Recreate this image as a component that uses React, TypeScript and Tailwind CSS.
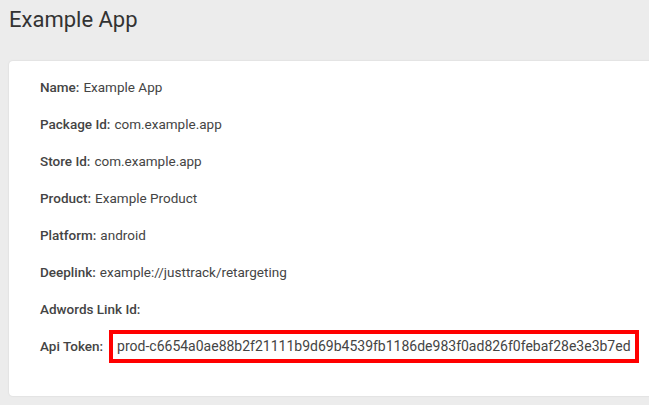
const rows: { label: string; value: string }[] = [
  { label: "Name:", value: "Example App" },
  { label: "Package Id:", value: "com.example.app" },
  { label: "Store Id:", value: "com.example.app" },
  { label: "Product:", value: "Example Product" },
  { label: "Platform:", value: "android" },
  { label: "Deeplink:", value: "example://justtrack/retargeting" },
  { label: "Adwords Link Id:", value: "" },
];

const token = "prod-c6654a0ae88b2f21111b9d69b4539fb1186de983f0ad826f0febaf28e3e3b7ed";

export default function App() {
  return (
    <div
      className="min-h-[405px] w-full overflow-hidden bg-[#ececec] pl-[9px]"
      style={{ fontFamily: "Roboto, 'Liberation Sans', sans-serif" }}
    >
      <h1 className="pt-[5px] text-[22px] leading-[30px] text-[#333]">Example App</h1>

      <div className="mt-[26px] mr-[-20px] rounded-[4px] bg-white pl-[31px] pt-[7.5px] pb-[31.5px] shadow-[0_0_2px_rgba(0,0,0,0.12)]">
        {rows.map((row) => (
          <div key={row.label} className="flex h-[37px] items-center text-[13.5px] text-[#444]">
            <span className="font-medium">{row.label}</span>
            {row.value && <span className="ml-[4px]">{row.value}</span>}
          </div>
        ))}
        <div className="flex h-[37px] items-center text-[13.5px] text-[#444]">
          <span className="font-medium">Api Token:</span>
          <span className="ml-[6px] border-[4px] border-[#ff0000] px-[4px] text-[14px] leading-[25px]">
            {token}
          </span>
        </div>
      </div>
    </div>
  );
}
